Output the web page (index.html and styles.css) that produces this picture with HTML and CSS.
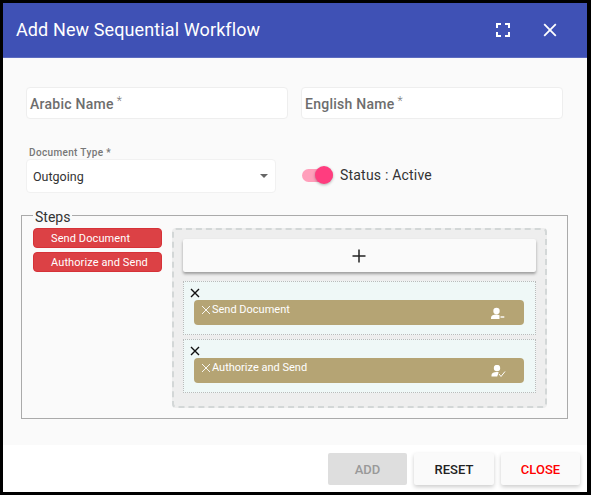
FILE: index.html
```html
<!DOCTYPE html>
<html lang="en">
<head>
<meta charset="utf-8">
<title>Add New Sequential Workflow</title>
<link rel="stylesheet" href="styles.css">
</head>
<body>
<div class="dialog">
  <header class="titlebar">
    <h1 class="title">Add New Sequential Workflow</h1>
    <div class="title-actions">
      <svg class="icon-full" viewBox="0 0 14 14" width="14" height="14"><path d="M1 5V1h4M9 1h4v4M13 9v4H9M5 13H1V9" fill="none" stroke="#fff" stroke-width="2"/></svg>
      <svg class="icon-close" viewBox="0 0 14 14" width="14" height="14"><path d="M1.2 1.2l11.6 11.6M12.8 1.2L1.2 12.8" fill="none" stroke="#fff" stroke-width="1.8"/></svg>
    </div>
  </header>
  <main class="content">
    <div class="row-names">
      <div class="input"><span class="ph">Arabic Name</span><span class="star">*</span></div>
      <div class="input"><span class="ph">English Name</span><span class="star">*</span></div>
    </div>
    <div class="row-type">
      <div class="field">
        <div class="field-label">Document Type *</div>
        <div class="select"><span>Outgoing</span><i class="caret"></i></div>
      </div>
      <div class="status">
        <div class="toggle"><i class="knob"></i></div>
        <span class="status-text">Status : Active</span>
      </div>
    </div>
    <fieldset class="steps">
      <legend class="steps-legend">Steps</legend>
      <div class="palette">
        <div class="chip">Send Document</div>
        <div class="chip">Authorize and Send</div>
      </div>
      <div class="board">
        <div class="add-step">
          <svg viewBox="0 0 14 14" width="14" height="14"><path d="M7 0.5v13M0.5 7h13" fill="none" stroke="#222" stroke-width="1.5"/></svg>
        </div>
        <div class="slot">
          <svg class="slot-x" viewBox="0 0 10 10" width="10" height="10"><path d="M1 1l8 8M9 1l-8 8" fill="none" stroke="#111" stroke-width="1.4"/></svg>
          <div class="step">
            <span class="step-name"><svg viewBox="0 0 10 10" width="10" height="10"><path d="M1 1l8 8M9 1l-8 8" fill="none" stroke="#fff" stroke-width=".9"/></svg>Send Document</span>
            <svg class="step-icon" viewBox="0 0 16 14" width="16" height="14"><circle cx="6.500" cy="4" r="3.200" fill="#fff"/><path d="M1 12v-1.500c0-2 2.500-3 5-3 1.500 0 2.500.300 3.500.800V12z" fill="#fff"/><path d="M10.500 10h3.800" stroke="#fff" stroke-width="1.400"/></svg>
          </div>
        </div>
        <div class="slot">
          <svg class="slot-x" viewBox="0 0 10 10" width="10" height="10"><path d="M1 1l8 8M9 1l-8 8" fill="none" stroke="#111" stroke-width="1.4"/></svg>
          <div class="step">
            <span class="step-name"><svg viewBox="0 0 10 10" width="10" height="10"><path d="M1 1l8 8M9 1l-8 8" fill="none" stroke="#fff" stroke-width=".9"/></svg>Authorize and Send</span>
            <svg class="step-icon" viewBox="0 0 16 14" width="16" height="14"><circle cx="7" cy="3" r="3.200" fill="#fff"/><path d="M1.500 11.500V10c0-2 2.500-3 5-3 .800 0 1.500.100 2.200.300l-1.500 4.200z" fill="#fff"/><path d="M9 9l2 2.500 4-5" fill="none" stroke="#fff" stroke-width="1"/></svg>
          </div>
        </div>
      </div>
    </fieldset>
  </main>
  <footer class="actions">
    <button class="btn btn-add" type="button">ADD</button>
    <button class="btn btn-reset" type="button">RESET</button>
    <button class="btn btn-close" type="button">CLOSE</button>
  </footer>
</div>
</body>
</html>
```
FILE: styles.css
```css
* { box-sizing: border-box; }
html, body { margin: 0; padding: 0; }
body { width: 591px; height: 495px; background: #000; font-family: Roboto, "Liberation Sans", sans-serif; overflow: hidden; padding: 3px 4px 3px 3px; }
.dialog { width: 584px; height: 489px; background: #fafafa; display: flex; flex-direction: column; }
.titlebar { height: 55px; flex: none; background: #3f51b5; color: #fff; display: flex; align-items: center; justify-content: space-between; padding: 0 30px 0 13px; border-bottom: 1px solid #5c6bc0; }
.title { margin: 0; font-size: 18px; font-weight: 400; line-height: 24px; letter-spacing: .11px; }
.title-actions { display: flex; gap: 33px; align-items: center; }
.title-actions svg { display: block; }
.content { flex: 1; padding: 29px 0 0 18px; min-height: 0; }
.row-names { display: flex; gap: 13px; margin-left: 5px; width: 537px; }
.input { flex: 1; height: 32px; background: #fff; border: 1px solid #eee; border-radius: 4px; padding: 2px 3px 0; display: flex; align-items: center; }
.ph { font-size: 14px; font-weight: 500; color: #6d6d6d; letter-spacing: .25px; }
.star { font-size: 12px; font-weight: 300; margin-left: 3px; position: relative; top: -3px; color: #777; }
.row-type { display: flex; align-items: flex-end; margin-top: 28px; padding-left: 5px; }
.field { width: 250px; }
.field-label { font-size: 10px; font-weight: 500; color: #777; line-height: 12px; padding-left: 3px; letter-spacing: .35px; }
.select { height: 34px; background: #fff; border: 1px solid #f1f1f1; border-radius: 4px; display: flex; align-items: center; justify-content: space-between; padding: 0 7px 0 6px; font-size: 12.5px; color: #333; }
.caret { width: 0; height: 0; border-left: 4px solid transparent; border-right: 4px solid transparent; border-top: 4px solid #666; }
.status { display: flex; align-items: center; margin-left: 26px; height: 34px; padding-bottom: 2px; }
.toggle { width: 31px; height: 13px; border-radius: 7px; background: #ff9fbb; position: relative; margin-right: 7px; }
.knob { position: absolute; right: 0; top: -3px; width: 18px; height: 18px; border-radius: 50%; background: #ff3d7f; box-shadow: 0 1px 3px rgba(0,0,0,.3); }
.status-text { font-size: 14px; color: #333; letter-spacing: .2px; }
.steps { margin: 13px 0 0 0; width: 547px; height: 213px; border: 1px solid #aaa; padding: 4px 0 0 11px; display: flex; gap: 10px; align-items: flex-start; }
.steps-legend { padding: 4px 2px 0; margin: 0; font-size: 14px; color: #333; line-height: 14px; }
.palette { width: 129px; display: flex; flex-direction: column; gap: 4px; }
.chip { height: 20px; background: #dc4145; border: 1px solid #d63238; border-radius: 4px; color: #fff; font-size: 11px; font-weight: 400; line-height: 19px; padding-left: 17px; letter-spacing: .1px; }
.board { width: 375px; height: 180px; background: #eee; border: 2px dashed #d3d7d7; border-radius: 4px; padding: 9px; }
.add-step { height: 33px; background: #fafafa; border-radius: 2px; box-shadow: 0 2px 3px rgba(0,0,0,.35); display: flex; align-items: center; justify-content: center; margin-bottom: 9px; padding-right: 1px; }
.slot { height: 54px; background: #eff8f7; border: 1px dotted #bbb; margin-bottom: 4px; padding: 6px 11px 0 10px; }
.slot-x { display: block; margin-left: -4px; }
.step { height: 25px; background: #b5a474; border-radius: 4px; color: #fff; display: flex; justify-content: space-between; padding: 0 18px 0 7px; margin-top: 2px; }
.step-name { font-size: 11px; line-height: 20px; display: flex; align-items: center; gap: 1px; height: 20px; color: #fff; }
.step-icon { margin-top: 7px; }
.actions { flex: none; height: 47px; background: #fff; display: flex; justify-content: flex-end; gap: 7px; padding: 8px 7px 0 0; }
.btn { width: 79px; height: 32px; border: 0; border-radius: 2px; font-family: inherit; font-size: 13px; font-weight: 500; background: #fafafa; box-shadow: 0 2px 4px rgba(0,0,0,.2); color: #222; padding: 0; }
.btn-reset { width: 80px; }
.btn-add { background: #dedede; color: #999; box-shadow: none; }
.btn-close { color: #f00; }
```
